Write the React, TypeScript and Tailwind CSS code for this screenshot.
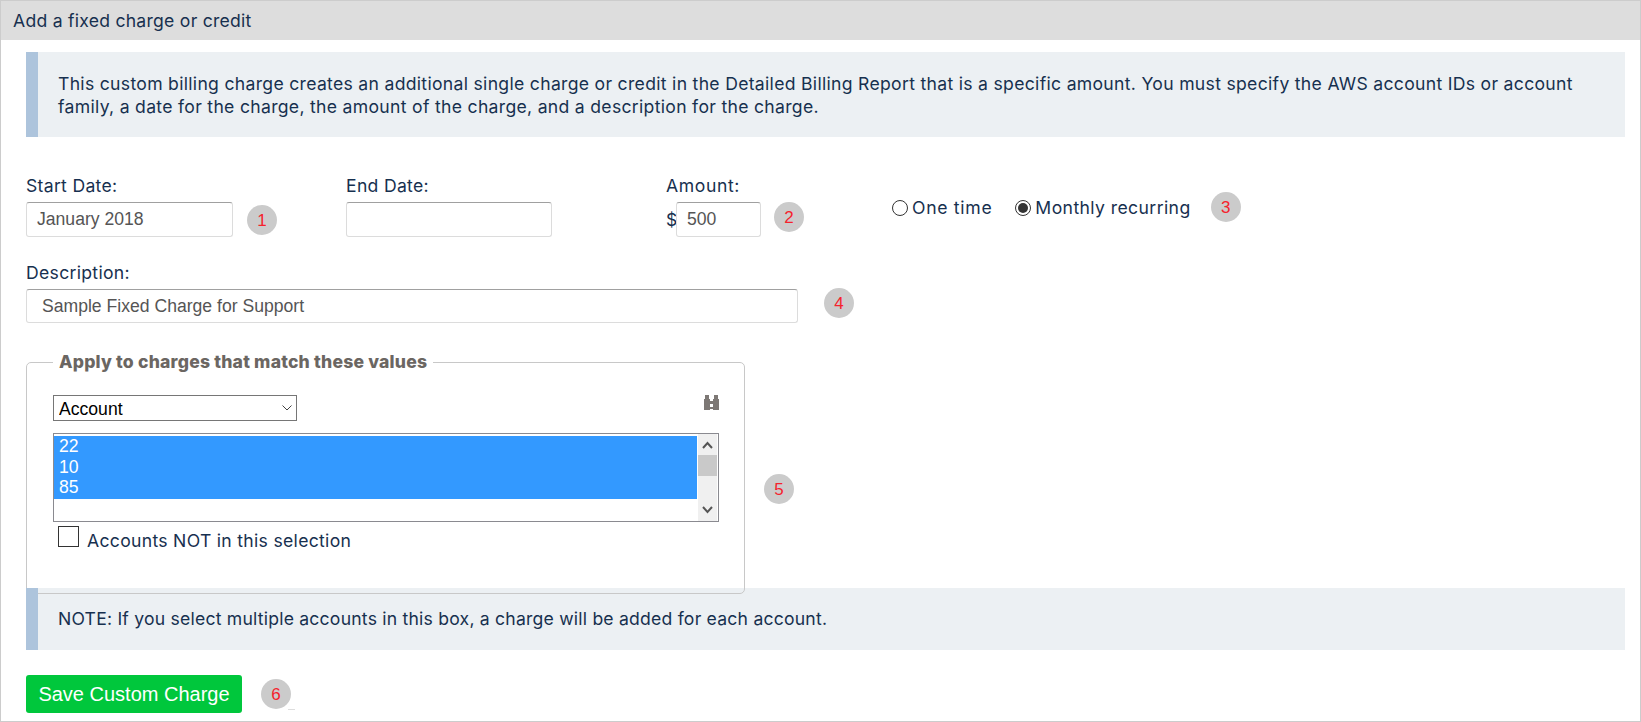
import React from "react";

const sans = "font-['Inter','Liberation_Sans',sans-serif]";
const arial = "font-['Liberation_Sans',Arial,sans-serif]";

function Badge({ n, className = "" }: { n: number; className?: string }) {
  return (
    <div className={`shrink-0 w-[30px] h-[30px] rounded-full bg-[#cbcbcb] flex items-center justify-center text-[17px] leading-none tracking-normal text-[#f5222d] ${arial} ${className}`}>
      {n}
    </div>
  );
}

function Field({ value = "", className = "" }: { value?: string; className?: string }) {
  return (
    <input
      readOnly
      value={value}
      className={`block h-[35px] border border-[#dcdcdc] border-t-[#a0a0a0] rounded-[3px] bg-white text-[17.6px] tracking-normal text-[#555] outline-none ${arial} ${className}`}
    />
  );
}

function Radio({ on, label, className = "" }: { on?: boolean; label: string; className?: string }) {
  return (
    <div className={`flex items-center gap-[4px] mt-[2px] ${className}`}>
      <div className="w-[16px] h-[16px] rounded-full border border-[#333] bg-white flex items-center justify-center">
        {on && <div className="w-[10px] h-[10px] rounded-full bg-[#333]" />}
      </div>
      <span>{label}</span>
    </div>
  );
}

function Info({ children, className = "" }: { children: React.ReactNode; className?: string }) {
  return (
    <div className={`relative bg-[#ecf0f3] pl-[32px] flex items-center ${className}`}>
      <div className="absolute left-0 top-0 bottom-0 w-[12px] bg-[#adc4dc] z-20" />
      <div>{children}</div>
    </div>
  );
}

export default function App() {
  return (
    <div className={`box-border w-[1641px] h-[722px] border border-[#ccc] bg-white text-[#17304f] text-[17.6px] tracking-[0.3px] overflow-hidden ${sans}`}>
      <div className="h-[39px] bg-[#dddddd] pl-[12px] pt-[1px] flex items-center tracking-[0.25px]">Add a fixed charge or credit</div>

      <div className="pl-[25px] pr-[15px]">
        <Info className="mt-[12px] h-[85px] leading-[23px]">
          This custom billing charge creates an additional single charge or credit in the Detailed Billing Report that is a specific amount. You must specify the AWS account IDs or account
          <br />
          family, a date for the charge, the amount of the charge, and a description for the charge.
        </Info>

        <div className="mt-[37px] flex items-start">
          <div className="w-[320px] shrink-0">
            <div className="h-[28px] leading-[24px]">Start Date:</div>
            <div className="flex items-start">
              <Field value="January 2018" className="w-[207px] pl-[10px]" />
              <Badge n={1} className="ml-[14px] mt-[3px]" />
            </div>
          </div>
          <div className="w-[320px] shrink-0">
            <div className="h-[28px] leading-[24px]">End Date:</div>
            <Field className="w-[206px]" />
          </div>
          <div className="w-[226px] shrink-0">
            <div className="h-[28px] leading-[24px] tracking-[0.6px]">Amount:</div>
            <div className="flex items-start">
              <span className="w-[10px] leading-[35px]">$</span>
              <Field value="500" className="w-[85px] pl-[10px]" />
              <Badge n={2} className="ml-[13px]" />
            </div>
          </div>
          <div className="mt-[18px] flex items-center">
            <Radio label="One time" className="tracking-[0.7px]" />
            <div className="w-[23px]" />
            <Radio on label="Monthly recurring" className="tracking-[0.4px]" />
            <Badge n={3} className="ml-[20px]" />
          </div>
        </div>

        <div className="mt-[24px]">
          <div className="h-[28px] leading-[24px]">Description:</div>
          <div className="flex items-start">
            <Field value="Sample Fixed Charge for Support" className="w-[772px] !h-[34px] pl-[15px]" />
            <Badge n={4} className="ml-[26px] -mt-px" />
          </div>
        </div>

        <div className="flex items-start">
          <fieldset className="relative z-10 mt-[27px] w-[719px] h-[244px] border border-[#c8c8c8] rounded-[5px] pl-[26px] pt-[21px]">
            <legend className="px-[6px] h-[24px] leading-[24px] font-extrabold tracking-[0.2px] text-[#6b6662]">Apply to charges that match these values</legend>
            <div className="w-[666px]">
              <div className="flex items-start justify-between">
                <div className="relative w-[244px] h-[26px]">
                  <select className={`appearance-none w-full h-full border border-[#767676] bg-white text-black text-[17.6px] tracking-normal pl-[5px] pb-[4px] ${arial}`} defaultValue="Account">
                    <option>Account</option>
                  </select>
                  <svg width="10" height="6" viewBox="0 0 10 6" fill="none" stroke="#444" strokeWidth="1" className="absolute right-[5px] top-[10px]">
                    <path d="M0.5 0.5l4.5 4.5 4.5-4.5" />
                  </svg>
                </div>
                <svg width="15" height="15" viewBox="0 0 15 15" fill="#7d7875" shapeRendering="crispEdges">
                  <path d="M1 0h4v4h1v11H0V4h1zM10 0h4v4h1v11H9V4h1zM6 6h3v3H6zM6 11.5h3V14H6z" />
                </svg>
              </div>
              <div className={`mt-[12px] h-[89px] border border-[#8a8a90] flex text-[17.6px] tracking-normal ${arial}`}>
                <div className="flex-1 pt-[2px]">
                  <div className="bg-[#3399ff] text-white leading-[20.5px] pl-[5px] pb-[1.5px]">
                    <div>22</div>
                    <div>10</div>
                    <div>85</div>
                  </div>
                </div>
                <div className="w-[19px] ml-px mr-px bg-[#f0f0f0] flex flex-col items-center">
                  <svg width="11" height="8" viewBox="0 0 11 8" fill="none" stroke="#555" strokeWidth="2" className="mt-[7px]">
                    <path d="M1 7l4.5-5 4.5 5" />
                  </svg>
                  <div className="mt-[6px] w-full h-[21px] bg-[#c9c9c9]" />
                  <svg width="11" height="8" viewBox="0 0 11 8" fill="none" stroke="#555" strokeWidth="2" className="mt-auto mb-[7px]">
                    <path d="M1 1l4.5 5 4.5-5" />
                  </svg>
                </div>
              </div>
              <div className="mt-[4px] ml-[5px] flex items-start gap-[8px]">
                <div className="w-[21px] h-[21px] border border-[#333] bg-white shrink-0" />
                <span className="mt-[3px] leading-[24px]">Accounts NOT in this selection</span>
              </div>
            </div>
          </fieldset>
          <Badge n={5} className="ml-[19px] mt-[151px]" />
        </div>

        <Info className="-mt-[6px] h-[62px] tracking-[0.21px]">
          NOTE: If you select multiple accounts in this box, a charge will be added for each account.
        </Info>

        <div className="mt-[25px] flex items-center">
          <button className={`w-[216px] h-[38px] rounded-[3px] bg-[#00c73c] text-white text-[20px] tracking-normal ${arial}`}>Save Custom Charge</button>
          <Badge n={6} className="ml-[19px]" />
          <div className="self-end -ml-[3px] w-[7px] h-px bg-[#dddddd] mb-[3px]" />
        </div>
      </div>
    </div>
  );
}
